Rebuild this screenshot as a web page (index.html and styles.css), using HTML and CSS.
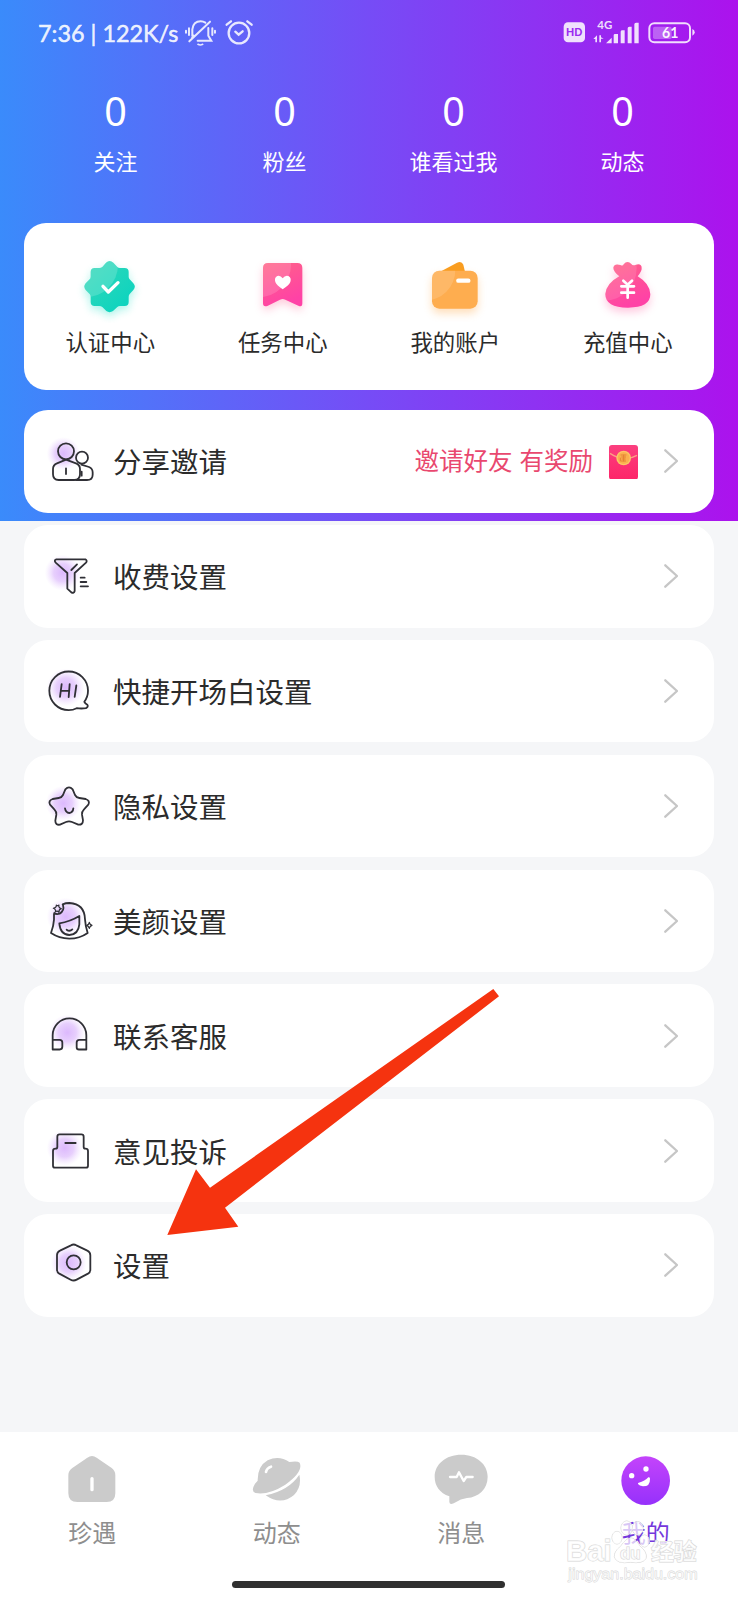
FILE: index.html
```html
<!DOCTYPE html>
<html lang="zh-CN">
<head>
<meta charset="utf-8">
<title>我的</title>
<link rel="stylesheet" href="styles.css">
</head>
<body>
<div class="screen">
  <svg class="defs" width="0" height="0" aria-hidden="true">
    <defs>
      <radialGradient id="glow"><stop offset="0" stop-color="#dcb8fd"/><stop offset=".5" stop-color="#dfbffc" stop-opacity=".75"/><stop offset="1" stop-color="#ecd9fe" stop-opacity="0"/></radialGradient>
      <linearGradient id="teal" x1="0" y1="0" x2="1" y2="1"><stop offset="0" stop-color="#36d8b8"/><stop offset="1" stop-color="#06d3c0"/></linearGradient>
      <linearGradient id="pink" x1="0" y1="0" x2="0.4" y2="1"><stop offset="0" stop-color="#ff6386"/><stop offset="1" stop-color="#ff42a6"/></linearGradient>
      <linearGradient id="face" x1="0" y1="0" x2="0" y2="1"><stop offset="0" stop-color="#c444fb"/><stop offset="1" stop-color="#9631fb"/></linearGradient>
      <linearGradient id="packet" x1="0" y1="0" x2="0" y2="1"><stop offset="0" stop-color="#fb3f7f"/><stop offset="1" stop-color="#fd2569"/></linearGradient>
      <filter id="soft" x="-50%" y="-50%" width="200%" height="200%"><feGaussianBlur stdDeviation="12"/></filter>
      <path id="badge" d="M319 158Q330 148 341 158L353 171Q356 174 361 174H375Q387 174 387 186V200Q387 205 390 208L401 220Q410 230 401 240L390 252Q387 256 387 260V276Q387 288 375 288H361Q356 288 353 291L340 303Q330 310 320 303L308 291Q304 288 299 288H285Q273 288 273 276V260Q273 256 270 252L258 240Q250 230 258 220L270 208Q273 205 273 200V186Q273 174 285 174H299Q304 174 308 171Z"/>
      <path id="ribbon" d="M803 159H891Q906 159 906 174V280Q906 293 894 287L855 269Q847 265 839 269L801 288Q788 292 788 280V174Q788 159 803 159Z"/>
      <rect id="wallet" x="193" y="182" width="137" height="114" rx="22"/>
      <path id="bag" d="M753 199Q735 184 735 173Q738 159 756 165Q764 169 766 163Q777 149 789 162Q793 169 803 164Q820 160 820 174Q821 183 808 199Q845 221 846 253Q846 293 779 293Q711 293 711 252Q714 220 753 199Z"/>
      <clipPath id="badgeClip"><use href="#badge"/></clipPath>
      <clipPath id="ribbonClip"><use href="#ribbon"/></clipPath>
      <clipPath id="walletClip"><use href="#wallet"/></clipPath>
      <clipPath id="bagClip"><use href="#bag"/></clipPath>
    </defs>
  </svg>

  <header class="hero">
    <div class="status">
      <span class="status-text">7:36 | 122K/s</span>
      <svg class="status-left" viewBox="550 50 220 95">
        <g fill="none" stroke="#fff" stroke-opacity=".85" stroke-width="6" stroke-linecap="round">
          <path d="M559 91V97M568 84V104M638 84V104M646 91V97M578 107V87Q581 63 603 63Q611 63 617 67M626 83V106L635 121H594M577 113L582 106M569 123L631 64"/>
          <path d="M595 132Q602 136 609 132" stroke-width="5"/>
          <circle cx="718" cy="98" r="31" stroke-width="7"/>
          <path d="M707 94L717 103L729 93M681 73L694 63M743 63L756 73" stroke-width="7"/>
        </g>
      </svg>
      <svg class="status-right" viewBox="580 50 410 95">
        <g fill="#fff" fill-opacity=".86">
          <rect x="588" y="66" width="64" height="60" rx="13"/>
          <text class="svg-num" x="689" y="87" font-size="34" font-weight="700" textLength="45" lengthAdjust="spacingAndGlyphs">4G</text>
          <path d="M715 129L732 112V129ZM738 129V105Q738 101 742 101H751V129ZM759 129V94Q759 90 764 90H771V129ZM780 129V84Q780 79 785 79H792V129ZM800 129V72Q800 67 805 67H813V129Z"/>
          <path d="M677 116L688 105V126H683V116ZM695 105H700V111L708 115H700V126H695Z"/>
          <rect x="856" y="79" width="56" height="37" rx="5" fill-opacity=".3"/>
          <path d="M974 86Q981 88 981 96T974 106Z"/>
          <text class="svg-num" x="883" y="114" font-size="46" font-weight="700" textLength="49" lengthAdjust="spacingAndGlyphs" fill-opacity=".95">61</text>
        </g>
        <rect x="845" y="69" width="122" height="57" rx="15" fill="none" stroke="#fff" stroke-opacity=".85" stroke-width="6"/>
        <text class="svg-num" x="595" y="108" font-size="33" font-weight="900" textLength="49" lengthAdjust="spacingAndGlyphs" fill="#9b2bf1">HD</text>
      </svg>
    </div>
    <div class="stats">
      <div class="stat"><b>0</b><span>关注</span></div>
      <div class="stat"><b>0</b><span>粉丝</span></div>
      <div class="stat"><b>0</b><span>谁看过我</span></div>
      <div class="stat"><b>0</b><span>动态</span></div>
    </div>
  </header>

  <main class="content">
    <section class="shortcuts">
      <div class="shortcut">
        <svg viewBox="223 123 216 216"><use href="#badge" y="12" fill="#15e0c4" opacity=".35" filter="url(#soft)"/><use href="#badge" fill="url(#teal)"/><circle cx="258" cy="165" r="97" fill="#fff" opacity=".17" clip-path="url(#badgeClip)"/><path d="M310 229L326 246L355 218" fill="none" stroke="#fff" stroke-width="10" stroke-linecap="round" stroke-linejoin="round"/></svg>
        <span>认证中心</span>
      </div>
      <div class="shortcut">
        <svg viewBox="740 123 216 216"><use href="#ribbon" y="12" fill="#ff7aa3" opacity=".38" filter="url(#soft)"/><use href="#ribbon" fill="url(#pink)"/><circle cx="775" cy="165" r="97" fill="#fff" opacity=".15" clip-path="url(#ribbonClip)"/><path d="M847 205Q840 195 831 198Q821 203 825 216Q829 226 847 238Q866 226 870 216Q874 203 864 198Q854 195 847 205Z" fill="#fff"/></svg>
        <span>任务中心</span>
      </div>
      <div class="shortcut">
        <svg viewBox="154 123 216 216"><use href="#wallet" y="14" fill="#ffae55" opacity=".4" filter="url(#soft)"/><path d="M216 186L268 158Q282 152 287 164L293 190H214Z" fill="#f99d20"/><use href="#wallet" fill="#fead4f"/><circle cx="171" cy="180" r="92" fill="#fff" opacity=".14" clip-path="url(#walletClip)"/><path d="M272 212H302" stroke="#fff" stroke-width="13" stroke-linecap="round"/></svg>
        <span>我的账户</span>
      </div>
      <div class="shortcut">
        <svg viewBox="671 123 216 216"><use href="#bag" y="14" fill="#ff74ae" opacity=".38" filter="url(#soft)"/><use href="#bag" fill="url(#pink)"/><circle cx="708" cy="175" r="97" fill="#fff" opacity=".12" clip-path="url(#bagClip)"/><path d="M765 212L778 224L791 212M759 229H797M759 248H797M778 225V263" fill="none" stroke="#fff" stroke-width="8" stroke-linecap="round"/></svg>
        <span>充值中心</span>
      </div>
    </section>

    <nav class="menu">
      <a class="row">
        <svg class="row-icon" viewBox="132 100 168 168"><circle cx="190" cy="162" r="50" fill="url(#glow)"/><circle cx="198" cy="155" r="24"/><path d="M198 180L171 191Q159 196 159 208V224Q159 241 176 241H223Q240 241 240 224V208Q240 196 228 191ZM198 206V223"/><circle cx="246" cy="174" r="18"/><path d="M244 195L267 202Q278 207 278 218V225Q278 241 261 241H228M245 216V228"/></svg>
        <span class="row-title">分享邀请</span>
        <span class="promo">邀请好友 有奖励</span>
        <svg class="packet" viewBox="723 135 87 104"><rect x="723" y="135" width="87" height="104" rx="9" fill="url(#packet)"/><path d="M726 160Q767 188 807 166" fill="none" stroke="#fba184" stroke-width="4"/><circle cx="767" cy="174" r="22" fill="#fbc666"/><circle cx="767" cy="174" r="18" fill="#fbb04e"/><path d="M758 165H775M760 171H774M761 177H773M759 183H774M767 164V184M757 173V184" stroke="#e07a30" stroke-width="2.5"/></svg>
        <svg class="chevron" viewBox="0 0 14 24"><path d="M1.3 1.3L13 12L1.3 22.7"/></svg>
      </a>
      <a class="row">
        <svg class="row-icon" viewBox="132 445 168 168"><circle cx="188" cy="519" r="54" fill="url(#glow)"/><path d="M169 479H256Q263 483 258 489L224 520V574Q222 582 214 578L202 567V520L167 489Q161 482 169 479ZM214 511L231 494M242 534H254M242 547H259M242 560H264"/></svg>
        <span class="row-title">收费设置</span>
        <svg class="chevron" viewBox="0 0 14 24"><path d="M1.3 1.3L13 12L1.3 22.7"/></svg>
      </a>
      <a class="row">
        <svg class="row-icon" viewBox="72 69.5 168 168"><circle cx="137" cy="143" r="57" fill="url(#glow)"/><path d="M193 186Q204 171 204 153A58 58 0 1 0 146 211Q159 211 170 205Q184 207 198 205Q206 201 202 195Q195 191 193 186ZM125 133L120 171M149 133L146 172M122 153H148M169 137L164 171"/></svg>
        <span class="row-title">快捷开场白设置</span>
        <svg class="chevron" viewBox="0 0 14 24"><path d="M1.3 1.3L13 12L1.3 22.7"/></svg>
      </a>
      <a class="row">
        <svg class="row-icon" viewBox="72 414 168 168"><circle cx="130" cy="490" r="53" fill="url(#glow)"/><path d="M136 448Q147 436 158 448L165 465Q169 473 178 474L197 477Q211 482 205 494L192 508Q185 515 186 524L189 541Q189 555 175 554L156 546Q147 542 138 546L120 554Q106 556 106 542L109 524Q110 515 103 508L90 494Q84 482 98 477L116 474Q125 473 129 465ZM135 505Q137 518 148 519Q159 517 160 505"/></svg>
        <span class="row-title">隐私设置</span>
        <svg class="chevron" viewBox="0 0 14 24"><path d="M1.3 1.3L13 12L1.3 22.7"/></svg>
      </a>
      <a class="row">
        <svg class="row-icon" viewBox="72 759 168 168"><circle cx="137" cy="830" r="57" fill="url(#glow)"/><path d="M128 793Q137 789 148 789Q194 792 195 838Q196 857 203 879Q179 896 148 896Q117 895 93 879Q101 857 102 839V822M118 850Q150 845 178 828V853Q175 884 148 885Q121 884 118 850ZM140 869Q149 876 157 868M129 796Q134 812 119 821Q108 824 103 819"/><path stroke-width="3.5" d="M109 795Q112 799 117 795Q114 802 124 806Q116 808 117 817Q112 811 106 815Q109 809 100 805Q110 803 109 795ZM208 847Q209 854 216 856Q209 858 208 865Q206 858 200 856Q207 854 208 847Z"/></svg>
        <span class="row-title">美颜设置</span>
        <svg class="chevron" viewBox="0 0 14 24"><path d="M1.3 1.3L13 12L1.3 22.7"/></svg>
      </a>
      <a class="row">
        <svg class="row-icon" viewBox="72 113.5 168 168"><circle cx="142" cy="187" r="54" fill="url(#glow)"/><path d="M98 238V195A50.500 50.500 0 0 1 199 195V238H177Q170 238 170 231V217Q170 209 178 209H199M98 209H119Q127 209 127 217V230Q127 238 119 238H98"/></svg>
        <span class="row-title">联系客服</span>
        <svg class="chevron" viewBox="0 0 14 24"><path d="M1.3 1.3L13 12L1.3 22.7"/></svg>
      </a>
      <a class="row">
        <svg class="row-icon" viewBox="72 458 168 168"><circle cx="134" cy="533" r="54" fill="url(#glow)"/><path d="M119 492H184Q191 492 191 499V530Q191 535 196 535Q204 535 204 542V586Q204 592 198 592H105Q99 592 99 586V542Q99 535 107 535Q112 535 112 530V499Q112 492 119 492ZM136 518H167"/></svg>
        <span class="row-title">意见投诉</span>
        <svg class="chevron" viewBox="0 0 14 24"><path d="M1.3 1.3L13 12L1.3 22.7"/></svg>
      </a>
      <a class="row">
        <svg class="row-icon" viewBox="72 803 168 168"><circle cx="146" cy="881" r="54" fill="url(#glow)"/><path d="M153 828Q161 823 169 828L202 844Q211 848 211 858V901Q211 909 204 913L170 931Q161 936 152 931L118 913Q111 909 111 901V858Q111 848 120 844Z"/><circle cx="161" cy="879" r="21"/></svg>
        <span class="row-title">设置</span>
        <svg class="chevron" viewBox="0 0 14 24"><path d="M1.3 1.3L13 12L1.3 22.7"/></svg>
      </a>
    </nav>
  </main>

  <footer class="tabbar">
    <div class="tabs">
      <div class="tab"><svg viewBox="196 96 162 162"><path d="M263 113Q277 103 291 113L336 144Q347 152 347 166V220Q347 246 321 246H233Q206 246 206 220V166Q206 152 218 144Z" fill="#cbcbcb"/><path d="M277 176V209" stroke="#fff" stroke-width="10" stroke-linecap="round"/></svg><span>珍遇</span></div>
      <div class="tab"><svg viewBox="749 96 162 162"><path d="M772 182Q771 139 802 121Q836 105 867 126Q892 122 898 128Q910 155 855 194Q804 226 766 219Q750 214 764 191ZM796 226Q866 211 897 164Q905 200 881 225Q842 258 796 226Z" fill="#cbcbcb"/><path d="M797 156Q799 144 812 140" fill="none" stroke="#fff" stroke-width="8" stroke-linecap="round"/></svg><span>动态</span></div>
      <div class="tab"><svg viewBox="199 96 162 162"><path d="M281 104C327 104 360 133 360 170C360 207 333 231 298 234Q278 237 264 247Q246 257 245 246V229C216 219 201 197 201 170C201 133 234 104 281 104Z" fill="#cbcbcb"/><path d="M247 171H267L274 157L288 183L296 171H315" fill="none" stroke="#fff" stroke-width="7" stroke-linecap="round" stroke-linejoin="round"/></svg><span>消息</span></div>
      <div class="tab tab-active"><svg viewBox="752 96 162 162"><circle cx="832" cy="182" r="73" fill="url(#face)"/><circle cx="833" cy="147" r="8" fill="#fff"/><circle cx="790" cy="167" r="8" fill="#fff"/><path d="M811 188Q830 184 840 172Q845 170 845 176Q846 199 824 199Q813 198 809 192Q808 189 811 188Z" fill="#fff"/></svg><span>我的</span></div>
    </div>
    <div class="home-indicator"></div>
  </footer>

  <svg class="watermark" viewBox="590 290 405 205">
    <g fill="#fff" fill-opacity=".72" stroke="#d6d6d6" stroke-width="3" paint-order="stroke">
      <ellipse cx="746" cy="352" rx="15" ry="19"/><ellipse cx="775" cy="323" rx="17" ry="21"/><ellipse cx="808" cy="324" rx="16" ry="20"/><ellipse cx="829" cy="362" rx="14" ry="18"/>
      <path d="M788 353Q800 353 814 376Q838 396 833 414Q825 431 786 426Q745 432 738 410Q737 393 757 378Q773 353 788 353Z"/>
      <text class="svg-mark" x="593" y="423" font-size="86" font-weight="700" textLength="137" lengthAdjust="spacingAndGlyphs">Bai</text>
      <text class="svg-mark" x="755" y="416" font-size="52" font-weight="700" textLength="62" lengthAdjust="spacingAndGlyphs">du</text>
      <text class="svg-mark" x="848" y="420" font-size="69" font-weight="700" textLength="137">经验</text>
      <text class="svg-mark" x="600" y="475" font-size="46" textLength="388" lengthAdjust="spacingAndGlyphs" stroke-width="2.5">jingyan.baidu.com</text>
    </g>
  </svg>
  <svg class="pointer" viewBox="167 988 333 248"><path d="M167.300 1235L196 1169.300L210 1187.700L493.300 989L499 996.300L225 1207.700L238.300 1226.700Z" fill="#f5330f"/></svg>
</div>
</body>
</html>
```
FILE: styles.css
```css
* { box-sizing: border-box; }

body {
  margin: 0;
  font-family: "Noto Sans CJK SC", sans-serif;
  color: #2b2b2b;
}

svg { display: block; flex: none; }

.defs { position: absolute; }

.svg-num { font-family: Lato, sans-serif; }
.svg-mark { font-family: "Liberation Sans", "Noto Sans CJK SC", sans-serif; }

.screen {
  position: relative;
  display: flex;
  flex-direction: column;
  width: 738px;
  height: 1600px;
  overflow: hidden;
  background:
    linear-gradient(90deg, #3a8bfb 0%, #764cf6 50%, #ac12ed 100%) 0 0 / 100% 521px no-repeat,
    #f5f6f8;
}

.hero { height: 223px; color: #fff; }

.status {
  display: flex;
  align-items: center;
  padding: 17px 40px 0 38px;
}

.status-text {
  width: 145px;
  font-family: Lato, sans-serif;
  font-size: 23.4px;
  line-height: 32px;
  white-space: nowrap;
  color: rgba(255, 255, 255, .88);
  -webkit-text-stroke: .5px rgba(255, 255, 255, .88);
}

.status-left { width: 73.3px; height: 31.7px; }
.status-right { width: 136.7px; height: 31.7px; margin-left: auto; }

.stats { display: flex; padding: 38px 31px 0; }

.stat {
  flex: 1;
  display: flex;
  flex-direction: column;
  align-items: center;
}

.stat b {
  font-family: "Noto Sans", sans-serif;
  font-size: 39.5px;
  font-weight: 400;
  line-height: 48px;
}

.stat span { margin-top: 9px; font-size: 22px; line-height: 32px; }

.content { flex: 1; padding: 0 24px; }

.shortcuts {
  display: flex;
  height: 167px;
  padding-top: 28px;
  border-radius: 22px;
  background: #fff;
}

.shortcut {
  flex: 1;
  display: flex;
  flex-direction: column;
  align-items: center;
}

.shortcut svg { width: 72px; height: 72px; }
.shortcut span { margin-top: 2px; font-size: 22.4px; line-height: 32px; }

.menu {
  display: flex;
  flex-direction: column;
  gap: 12.2px;
  margin-top: 20px;
}

.row {
  display: flex;
  align-items: center;
  height: 102.7px;
  padding: 0 36.5px 0 20px;
  border-radius: 24px;
  background: #fff;
}

.row-icon {
  width: 56px;
  height: 56px;
  fill: none;
  stroke: #303036;
  stroke-width: 5.4;
  stroke-linecap: round;
  stroke-linejoin: round;
}

.row-icon circle[fill] { stroke: none; }

.row-title { margin: 0 auto 0 13px; font-size: 28.5px; line-height: 40px; }

.promo {
  margin: -2px 15.5px 0 0;
  font-size: 24.5px;
  line-height: 36px;
  word-spacing: 1.5px;
  color: #e9486f;
}

.packet { width: 29px; height: 34.7px; margin: 1px 26px 0 0; }

.chevron {
  width: 14px;
  height: 24px;
  fill: none;
  stroke: #c6c6c6;
  stroke-width: 2.3;
  stroke-linecap: round;
  stroke-linejoin: round;
}

.tabbar { height: 168px; background: #fff; }

.tabs { display: flex; padding-top: 20px; }

.tab {
  flex: 1;
  display: flex;
  flex-direction: column;
  align-items: center;
  color: #8e8e8e;
}

.tab svg { width: 54px; height: 54px; }
.tab span { margin-top: 9px; font-size: 24px; line-height: 34px; }
.tab-active { color: #7438dc; }

.home-indicator {
  width: 273px;
  height: 7px;
  margin: 32px 0 0 232px;
  border-radius: 4px;
  background: #303030;
}

.watermark {
  position: absolute;
  left: 564.7px;
  top: 1516.7px;
  width: 135px;
  height: 68.3px;
}

.pointer {
  position: absolute;
  left: 167px;
  top: 988px;
  width: 333px;
  height: 248px;
}
```
